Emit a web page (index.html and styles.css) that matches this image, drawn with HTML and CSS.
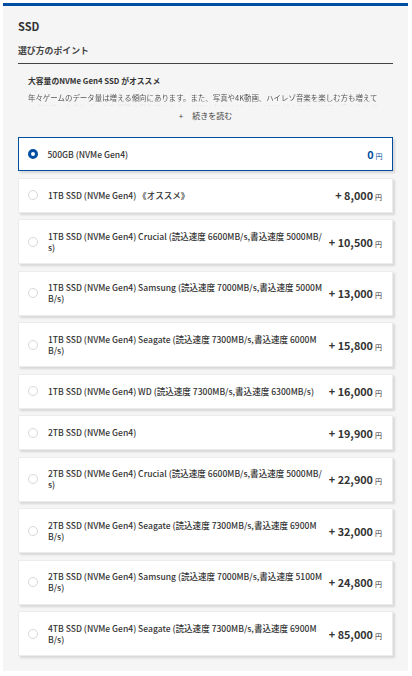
FILE: index.html
```html
<!DOCTYPE html>
<html lang="ja">
<head>
<meta charset="utf-8">
<title>SSD</title>
<link rel="stylesheet" href="styles.css">
</head>
<body>
<div class="panel">
  <h2 class="title">SSD</h2>
  <div class="points">
    <h3 class="points-head">選び方のポイント</h3>
    <div class="points-body">
      <p class="points-lead">大容量のNVMe Gen4 SSD がオススメ</p>
      <div class="points-text">
        <p>年々ゲームのデータ量は増える傾向にあります。また、写真や4K動画、ハイレゾ音楽を楽しむ方も増えていきます。大きなデータを頻繁に保存するなら、1TB以上のNVMe Gen4 SSDがオススメです。読み込みが速く快適です。</p>
      </div>
      <div class="more"><span class="more-plus">+</span>続きを読む</div>
    </div>
  </div>
  <ul class="options">
    <li class="option is-selected"><span class="radio"></span><span class="label">500GB (NVMe Gen4)</span><span class="price"><b>0</b><small>円</small></span></li>
    <li class="option"><span class="radio"></span><span class="label">1TB SSD (NVMe Gen4) 《オススメ》</span><span class="price"><b>+ 8,000</b><small>円</small></span></li>
    <li class="option"><span class="radio"></span><span class="label">1TB SSD (NVMe Gen4) Crucial (読込速度 6600MB/s,書込速度 5000MB/<br>s)</span><span class="price"><b>+ 10,500</b><small>円</small></span></li>
    <li class="option"><span class="radio"></span><span class="label">1TB SSD (NVMe Gen4) Samsung (読込速度 7000MB/s,書込速度 5000M<br>B/s)</span><span class="price"><b>+ 13,000</b><small>円</small></span></li>
    <li class="option"><span class="radio"></span><span class="label">1TB SSD (NVMe Gen4) Seagate (読込速度 7300MB/s,書込速度 6000M<br>B/s)</span><span class="price"><b>+ 15,800</b><small>円</small></span></li>
    <li class="option"><span class="radio"></span><span class="label">1TB SSD (NVMe Gen4) WD (読込速度 7300MB/s,書込速度 6300MB/s)</span><span class="price"><b>+ 16,000</b><small>円</small></span></li>
    <li class="option"><span class="radio"></span><span class="label">2TB SSD (NVMe Gen4)</span><span class="price"><b>+ 19,900</b><small>円</small></span></li>
    <li class="option"><span class="radio"></span><span class="label">2TB SSD (NVMe Gen4) Crucial (読込速度 6600MB/s,書込速度 5000MB/<br>s)</span><span class="price"><b>+ 22,900</b><small>円</small></span></li>
    <li class="option"><span class="radio"></span><span class="label">2TB SSD (NVMe Gen4) Seagate (読込速度 7300MB/s,書込速度 6900M<br>B/s)</span><span class="price"><b>+ 32,000</b><small>円</small></span></li>
    <li class="option"><span class="radio"></span><span class="label">2TB SSD (NVMe Gen4) Samsung (読込速度 7000MB/s,書込速度 5100M<br>B/s)</span><span class="price"><b>+ 24,800</b><small>円</small></span></li>
    <li class="option"><span class="radio"></span><span class="label">4TB SSD (NVMe Gen4) Seagate (読込速度 7300MB/s,書込速度 6900M<br>B/s)</span><span class="price"><b>+ 85,000</b><small>円</small></span></li>
  </ul>
</div>
</body>
</html>
```
FILE: styles.css
```css
html, body {
  margin: 0;
  padding: 0;
  background: #ffffff;
}
body {
  font-family: "Noto Sans CJK JP", "Noto Sans", sans-serif;
  color: #333333;
}
.panel {
  margin: 3px 4px 0 3px;
  border-top: 3px solid #004ea2;
  background: #f5f5f5;
  padding: 14px 15px 15px 15px;
}
.title {
  margin: 0;
  font-size: 11px;
  line-height: 12px;
  font-weight: 700;
  color: #333;
}
.points {
  margin-top: 13px;
}
.points-head {
  margin: 0;
  font-size: 8.9px;
  line-height: 12px;
  font-weight: 700;
  color: #444;
  padding-bottom: 6px;
  border-bottom: 1.5px solid #444;
}
.points-body {
  padding: 11px 12px 0 10px;
}
.points-lead {
  margin: 0;
  font-size: 7.8px;
  line-height: 11px;
  font-weight: 700;
  color: #333;
}
.points-text {
  margin-top: 7px;
  height: 14px;
  overflow: hidden;
  -webkit-mask-image: linear-gradient(to bottom, #000 50%, rgba(0,0,0,0.12) 80%, transparent 100%);
  mask-image: linear-gradient(to bottom, #000 50%, rgba(0,0,0,0.12) 80%, transparent 100%);
}
.points-text p {
  margin: 0;
  font-size: 7.45px;
  line-height: 10px;
  color: #555;
}
.more {
  margin: 3px -12px 0 -10px;
  text-align: center;
  font-size: 8px;
  line-height: 11px;
  color: #444;
}
.more-plus {
  margin-right: 9px;
}
.options {
  list-style: none;
  margin: 16px 0 0 0;
  padding: 0;
  display: flex;
  flex-direction: column;
  gap: 6.5px;
}
.option {
  display: flex;
  align-items: center;
  background: #fff;
  border: 1px solid #ececec;
  box-shadow: 2px 2px 2px rgba(0,0,0,0.12);
  padding: 10.5px 10px 10.5px 9px;
  font-size: 8.55px;
  line-height: 11px;
}
.option.is-selected {
  border: 1.5px solid #004ea2;
  padding: 10px 9.5px 10px 8.5px;
}
.radio {
  flex: none;
  width: 10px;
  height: 10px;
  box-sizing: border-box;
  border-radius: 50%;
  border: 1px solid #d8d8d8;
  background: #fff;
  margin-right: 10px;
}
.is-selected .radio {
  border: 3px solid #004ea2;
}
.label {
  flex: 1;
  min-width: 0;
  font-weight: 500;
  color: #333;
  word-break: break-all;
}
.price {
  flex: none;
  display: flex;
  align-items: baseline;
  white-space: nowrap;
  margin-left: 2px;
  color: #333;
  height: 12px;
  line-height: 12px;
}
.price b {
  font-size: 10.8px;
  font-weight: 700;
}
.price small {
  font-size: 7px;
  margin-left: 2px;
}
.is-selected .price {
  color: #004ea2;
}
```
